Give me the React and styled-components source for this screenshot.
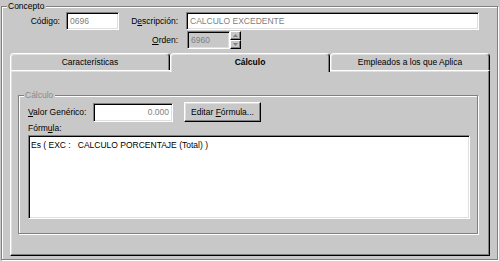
import React from "react";
import styled, { createGlobalStyle } from "styled-components";

const face = "#c8c8c8";
const shadow = "#808080";
const light = "#dfdfdf";

const GlobalStyle = createGlobalStyle`
  html, body {
    margin: 0;
    padding: 0;
    background: ${face};
  }
  body {
    width: 500px;
    height: 261px;
    overflow: hidden;
    font-family: "Liberation Sans", Arial, sans-serif;
    font-size: 8.5px;
    color: #000;
  }
`;

const Window = styled.div`
  width: 500px;
  height: 261px;
  background: ${face};
`;

/* etched frame, win9x style */
const Group = styled.fieldset`
  min-width: 0;
  border: 1px solid ${shadow};
  box-shadow: inset 1px 1px #fff, 1px 1px #fff;
`;

const ConceptGroup = styled(Group)`
  margin: 0 2px 0 1px;
  padding: 0 7px 3px 8px;
`;

const CalcGroup = styled(Group)`
  margin: 0;
  padding: 1px 7px 14px 9px;
`;

const Legend = styled.legend`
  margin-left: ${p => p.$ml}px;
  padding: 0 2px 0 1px;
  line-height: 12px;
  background: ${face};
  position: relative;
  color: ${p => (p.$disabled ? "#8a8a8a" : "#000")};
`;

const FormGrid = styled.div`
  display: grid;
  grid-template-columns: 56px 53px 67px 293px;
  grid-auto-rows: 18px;
  row-gap: 1px;
`;

const Spacer = styled.span`
  grid-column: span 2;
`;

const Label = styled.label`
  display: flex;
  align-items: center;
  justify-content: ${p => (p.$left ? "flex-start" : "flex-end")};
  padding-right: ${p => p.$pr || 0}px;
  width: ${p => (p.$width ? `${p.$width}px` : "auto")};
  white-space: pre;
`;

const Key = styled.u`
  text-decoration: underline;
  text-underline-offset: 1px;
`;

const Field = styled.div`
  box-sizing: border-box;
  width: ${p => (p.$width ? `${p.$width}px` : "100%")};
  height: ${p => p.$height || 18}px;
  border: 1px solid;
  border-color: ${shadow} #fff #fff ${shadow};
  box-shadow: inset 1px 1px #000, inset -1px -1px ${light};
  background: ${p => (p.$grey ? face : "#fff")};
  color: ${shadow};
  padding: 0 3px;
  display: flex;
  align-items: center;
  justify-content: ${p => (p.$right ? "flex-end" : "flex-start")};
  white-space: nowrap;
`;

const SpinBox = styled.div`
  display: flex;
  width: 54px;
  padding-left: 1px;
`;

const Spinner = styled.div`
  display: flex;
  flex-direction: column;
  width: 11px;
`;

const SpinButton = styled.div`
  box-sizing: border-box;
  flex: 1;
  border: 1px solid;
  border-color: #fff #000 #000 #fff;
  box-shadow: inset -1px -1px ${shadow};
  display: flex;
  align-items: center;
  justify-content: center;
`;

const TabStrip = styled.div`
  display: flex;
  margin-top: 4px;
  height: 17px;
  align-items: flex-start;
`;

const Tab = styled.div`
  position: relative;
  z-index: ${p => (p.$active ? 1 : 0)};
  flex: 1;
  box-sizing: border-box;
  height: ${p => (p.$active ? 19 : 17)}px;
  margin-bottom: ${p => (p.$active ? -2 : 0)}px;
  border: 1px solid;
  border-bottom: none;
  border-color: #fff #000 transparent #fff;
  border-radius: 4px 4px 0 0;
  box-shadow: inset -1px 0 ${shadow}, inset 1px 1px ${light};
  background: ${face};
  text-align: center;
  line-height: 16px;
  font-weight: ${p => (p.$active ? "bold" : "normal")};
`;

const Panel = styled.div`
  box-sizing: border-box;
  height: 186px;
  border: 1px solid;
  border-color: #fff #000 #000 #fff;
  box-shadow: inset -1px -1px ${shadow}, inset 1px 1px ${light};
  padding: 18px 11px 0 7px;
`;

const Row = styled.div`
  display: flex;
  align-items: center;
  height: 20px;
`;

const Button = styled.div`
  box-sizing: border-box;
  width: 77px;
  height: 20px;
  margin-left: 11px;
  border: 1px solid;
  border-color: #fff #000 #000 #fff;
  box-shadow: inset -1px -1px ${shadow}, inset 1px 1px ${light};
  text-align: center;
  line-height: 18px;
  white-space: pre;
`;

const FormulaLabel = styled(Label)`
  height: 12px;
`;

const FormulaBox = styled(Field)`
  margin-top: 1px;
  height: 84px;
  align-items: flex-start;
  color: #000;
  padding: 4px 2px;
  white-space: pre;
`;

const Arrow = ({ up }) => (
  <svg width="5" height="3" viewBox="0 0 5 3">
    <polygon points={up ? "2.5,0 5,3 0,3" : "0,0 5,0 2.5,3"} fill={shadow} />
  </svg>
);

export default function App() {
  return (
    <Window>
      <GlobalStyle />
      <ConceptGroup>
        <Legend $ml={-3}>Concepto</Legend>
        <FormGrid>
          <Label $pr={6}>Código:</Label>
          <Field>0696</Field>
          <Label $pr={8}>
            <span>D<Key>e</Key>scripción:</span>
          </Label>
          <Field>CALCULO EXCEDENTE</Field>
          <Spacer />
          <Label $pr={8}>
            <span><Key>O</Key>rden:</span>
          </Label>
          <SpinBox>
            <Field $width={43} $grey>6960</Field>
            <Spinner>
              <SpinButton><Arrow up /></SpinButton>
              <SpinButton><Arrow /></SpinButton>
            </Spinner>
          </SpinBox>
        </FormGrid>
        <TabStrip>
          <Tab>Características</Tab>
          <Tab $active>Cálculo</Tab>
          <Tab>Empleados a los que Aplica</Tab>
        </TabStrip>
        <Panel>
          <CalcGroup>
            <Legend $ml={-4} $disabled>Cálculo</Legend>
            <Row>
              <Label $left $width={65}>
                <span><Key>V</Key>alor Genérico:</span>
              </Label>
              <Field $width={80} $height={19} $right>0.000</Field>
              <Button>
                Editar <Key>F</Key>órmula...
              </Button>
            </Row>
            <FormulaLabel $left>
              <span>Fórm<Key>u</Key>la:</span>
            </FormulaLabel>
            <FormulaBox>{"Es ( EXC :   CALCULO PORCENTAJE (Total) )"}</FormulaBox>
          </CalcGroup>
        </Panel>
      </ConceptGroup>
    </Window>
  );
}
